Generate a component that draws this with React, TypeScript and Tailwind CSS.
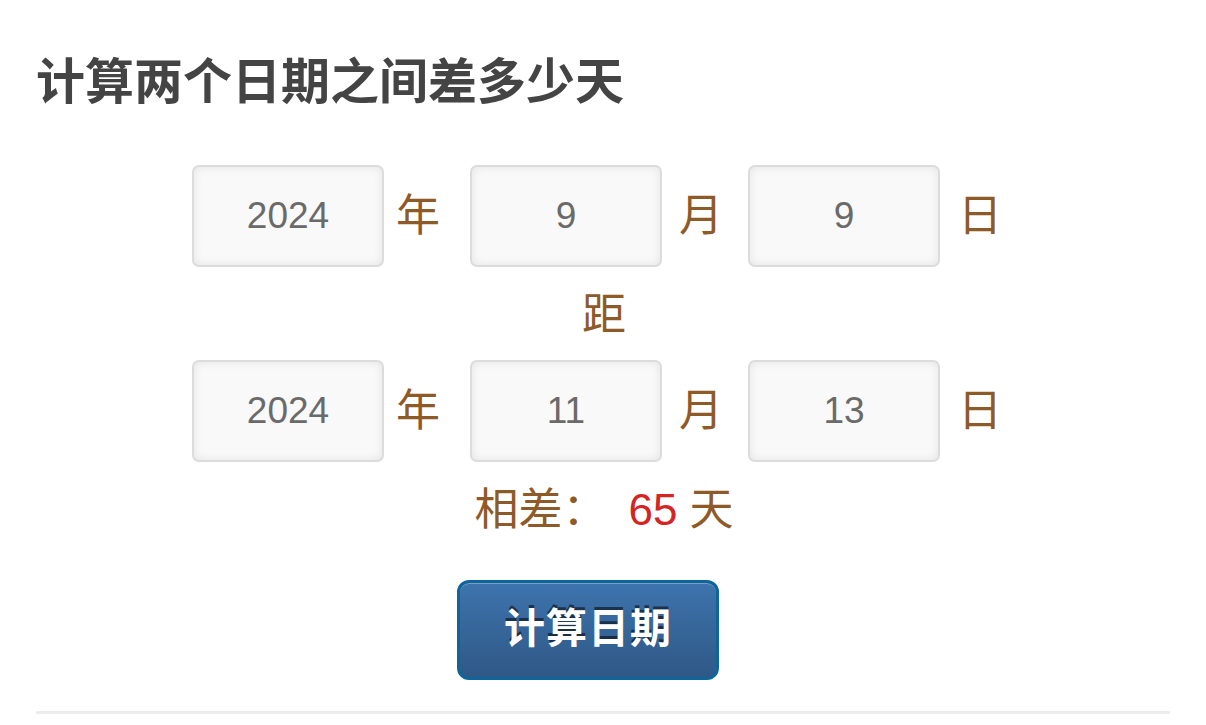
import { useState } from "react";

const DateRow = ({ y, m, d }: { y: string; m: string; d: string }) => {
  const parts: [string, string][] = [
    [y, "年"],
    [m, "月"],
    [d, "日"],
  ];
  return (
    <div className="flex items-center pl-[156px]">
      {parts.map(([val, label], i) => (
        <div key={label} className={`flex items-center ${i > 0 ? "ml-[30px]" : ""}`}>
          <input
            readOnly
            value={val}
            className="w-[192px] h-[102px] rounded-[7px] border-2 border-[#dcdcdc] bg-[#f9f9f9] text-center text-[37px] text-[#6a6a6a] shadow-[inset_0_0_10px_rgba(0,0,0,0.09)] outline-none font-['Liberation_Sans',Arial,sans-serif]"
          />
          <span
            className={`${i > 0 ? "ml-[17px] w-[39px]" : "ml-[12px] w-[44px]"} ${i === 2 ? "pl-[1px]" : ""} text-[44px] leading-none text-[#8e5a28] whitespace-nowrap`}
          >
            {label}
          </span>
        </div>
      ))}
    </div>
  );
};

export default function App() {
  const [days] = useState(65);

  return (
    <div className="w-[1206px] h-[725px] bg-white overflow-hidden font-['Liberation_Sans','Noto_Sans_CJK_SC',sans-serif]">
      <div className="px-[36px] pt-[58px]">
        <h2 className="text-[49px] font-bold leading-none text-[#444]">
          计算两个日期之间差多少天
        </h2>

        <div className="mt-[58px]">
          <DateRow y="2024" m="9" d="9" />
          <div className="text-center text-[44px] leading-none text-[#8e5a28] mt-[26px] mb-[23px] pl-[2px]">距</div>
          <DateRow y="2024" m="11" d="13" />

          <div className="mt-[26px] text-center text-[44px] leading-none text-[#8e5a28] pl-[2px]">
            相差：
            <span className="ml-[22px] text-[#d42424]">{days}</span> 天
          </div>

          <div className="mt-[48px] flex justify-center">
            <button className="ml-[-30px] w-[262px] h-[100px] rounded-[12px] border-[3px] border-[#0d659a] bg-gradient-to-b from-[#3d74ad] to-[#2f5886] text-white text-[41px] font-bold tracking-[1px] shadow-[inset_0_1px_0_rgba(255,255,255,0.3)] [text-shadow:0_-3px_0_rgba(0,0,0,0.55)]">
              计算日期
            </button>
          </div>
        </div>

        <div className="mt-[31px] h-[3px] bg-[#ececec]" />
      </div>
    </div>
  );
}
